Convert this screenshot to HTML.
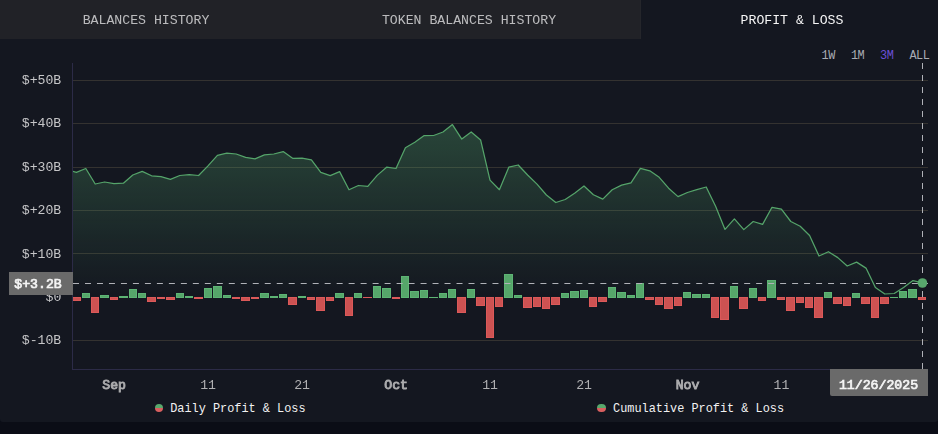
<!DOCTYPE html>
<html lang="en">
<head>
<meta charset="utf-8">
<title>Profit &amp; Loss</title>
<style>
html,body{margin:0;padding:0;}
body{width:938px;height:434px;overflow:hidden;background:#0b0d16;font-family:"Liberation Mono",monospace;}
.panel{position:absolute;left:0;top:0;width:938px;height:422px;background:#141720;border-radius:0 0 3px 3px;overflow:hidden;}
.tabbg{position:absolute;left:0;top:0;width:640px;height:39px;background:#212227;border-right:1px solid #25262b;}
.tab{position:absolute;top:1px;height:39px;line-height:39px;font-size:13.2px;color:#ededee;opacity:.76;will-change:transform;white-space:nowrap;transform:translateX(-50%);letter-spacing:0;}
.tab.active{color:#f6f6f6;opacity:1;}
.rng{position:absolute;top:48px;height:16px;line-height:16px;font-size:11.88px;letter-spacing:-0.5px;color:#a9acb4;white-space:nowrap;}
.rng.on{color:#6a4fd6;}
.leg{position:absolute;top:401px;height:16px;line-height:16px;font-size:11.88px;color:#f2f2f2;white-space:nowrap;}
.dot{position:absolute;top:403.8px;width:8.6px;height:8.4px;border-radius:50%;background:linear-gradient(#58a86c 0,#58a86c 50%,#d95f5f 50%,#d95f5f 100%);}
svg{position:absolute;left:0;top:0;will-change:transform;}
svg text{font-family:"Liberation Mono",monospace;font-size:13.2px;}
.grid line{stroke:#343230;stroke-width:1;shape-rendering:crispEdges;}
.yl text{fill:#c6c6c8;}
.xl text{fill:#b0b0b2;}
.xl text.b{fill:#acacae;stroke:#acacae;stroke-width:0.9;}
rect.g{fill:#56a66a;stroke:#5db474;stroke-width:1;}
rect.r{fill:#cd5252;stroke:#dc5959;stroke-width:1;}
</style>
</head>
<body>
<div class="panel">
<div class="tabbg"></div>
<div class="tab active" style="left:792.1px">PROFIT &amp; LOSS</div>
<div class="rng" style="left:821.6px">1W</div>
<div class="rng" style="left:850.9px">1M</div>
<div class="rng on" style="left:880.1px">3M</div>
<div class="rng" style="left:909.4px">ALL</div>
<div class="dot" style="left:154.6px"></div>
<div class="leg" style="left:170.2px">Daily Profit &amp; Loss</div>
<div class="dot" style="left:597.1px"></div>
<div class="leg" style="left:613px">Cumulative Profit &amp; Loss</div>
<div class="tab" style="left:146.4px">BALANCES HISTORY</div>
<div class="tab" style="left:469.2px">TOKEN BALANCES HISTORY</div>
<svg width="938" height="422" viewBox="0 0 938 422">
<defs>
<linearGradient id="ag" x1="0" y1="123" x2="0" y2="297.5" gradientUnits="userSpaceOnUse">
<stop offset="0" stop-color="#5ab474" stop-opacity="0.30"/>
<stop offset="1" stop-color="#5ab474" stop-opacity="0"/>
</linearGradient>
<clipPath id="cp"><rect x="73" y="63" width="855" height="307"/></clipPath>
</defs>
<g class="grid">
<line x1="72.5" x2="928" y1="80.5" y2="80.5"/>
<line x1="72.5" x2="928" y1="123.5" y2="123.5"/>
<line x1="72.5" x2="928" y1="167.5" y2="167.5"/>
<line x1="72.5" x2="928" y1="210.5" y2="210.5"/>
<line x1="72.5" x2="928" y1="253.5" y2="253.5"/>
<line x1="72.5" x2="928" y1="340.5" y2="340.5"/>
</g>
<line x1="72.5" x2="72.5" y1="63" y2="370" stroke="#2c2b47" stroke-width="1" shape-rendering="crispEdges"/>
<line x1="72" x2="928" y1="369.5" y2="369.5" stroke="#2c2b47" stroke-width="1" shape-rendering="crispEdges"/>
<g class="yl">
<text x="61.3" y="83.9" text-anchor="end">$+50B</text>
<text x="61.3" y="127.3" text-anchor="end">$+40B</text>
<text x="61.3" y="170.7" text-anchor="end">$+30B</text>
<text x="61.3" y="214.1" text-anchor="end">$+20B</text>
<text x="61.3" y="257.5" text-anchor="end">$+10B</text>
<text x="61.3" y="300.9" text-anchor="end">$0</text>
<text x="61.3" y="344.3" text-anchor="end">$-10B</text>
</g>
<g class="xl">
<text x="114.1" y="388.9" text-anchor="middle" class="b">Sep</text>
<text x="208.1" y="388.9" text-anchor="middle">11</text>
<text x="302.1" y="388.9" text-anchor="middle">21</text>
<text x="396.1" y="388.9" text-anchor="middle" class="b">Oct</text>
<text x="490.1" y="388.9" text-anchor="middle">11</text>
<text x="584.1" y="388.9" text-anchor="middle">21</text>
<text x="687.5" y="388.9" text-anchor="middle" class="b">Nov</text>
<text x="781.5" y="388.9" text-anchor="middle">11</text>
</g>
<g clip-path="url(#cp)">
<path d="M67.0,169.8 L76.4,172.4 L85.8,168.5 L95.2,184.0 L104.6,182.0 L114.0,183.7 L123.4,183.2 L132.8,175.0 L142.2,171.4 L151.6,175.8 L161.0,176.7 L170.4,179.4 L179.8,175.5 L189.2,174.6 L198.6,175.5 L208.0,165.9 L217.4,155.4 L226.8,153.1 L236.2,154.0 L245.6,157.4 L255.0,158.8 L264.4,154.8 L273.8,154.0 L283.2,151.6 L292.6,158.3 L302.0,158.1 L311.4,159.8 L320.8,172.4 L330.2,175.6 L339.6,171.6 L349.0,189.8 L358.4,185.5 L367.8,186.4 L377.2,175.4 L386.6,167.2 L396.0,168.5 L405.4,147.8 L414.8,142.3 L424.2,135.6 L433.6,135.5 L443.0,132.0 L452.4,124.6 L461.8,139.1 L471.2,132.0 L480.6,139.9 L490.0,180.1 L499.4,189.7 L508.8,167.2 L518.2,165.0 L527.6,175.0 L537.0,184.1 L546.4,195.0 L555.8,202.5 L565.2,199.5 L574.6,193.3 L584.0,186.0 L593.4,194.7 L602.8,199.1 L612.2,189.7 L621.6,185.1 L631.0,182.9 L640.4,168.3 L649.8,170.8 L659.2,177.3 L668.6,188.2 L678.0,196.6 L687.4,192.5 L696.8,189.7 L706.2,187.0 L715.6,206.3 L725.0,229.4 L734.4,218.9 L743.8,229.6 L753.2,221.5 L762.6,224.4 L772.0,207.3 L781.4,209.1 L790.8,221.5 L800.2,226.2 L809.6,235.5 L819.0,256.0 L828.4,251.7 L837.8,257.6 L847.2,266.0 L856.6,262.1 L866.0,268.1 L875.4,287.6 L884.8,294.0 L894.2,293.5 L903.6,287.4 L913.0,280.6 L922.4,282.9 L922.4,297.5 L67.0,297.5 Z" fill="url(#ag)"/>
<rect class="r" x="72.5" y="297.5" width="8" height="3"/>
<rect class="g" x="82.5" y="293.5" width="7" height="4"/>
<rect class="r" x="91.5" y="297.5" width="7" height="15"/>
<rect class="g" x="100.5" y="295.5" width="8" height="2"/>
<rect class="r" x="110.5" y="297.5" width="7" height="2"/>
<rect class="g" x="119.5" y="296.5" width="8" height="1"/>
<rect class="g" x="129.5" y="289.5" width="7" height="8"/>
<rect class="g" x="138.5" y="293.5" width="7" height="4"/>
<rect class="r" x="147.5" y="297.5" width="8" height="4"/>
<rect class="r" x="157.5" y="297.5" width="7" height="1"/>
<rect class="r" x="166.5" y="297.5" width="8" height="2"/>
<rect class="g" x="176.5" y="293.5" width="7" height="4"/>
<rect class="g" x="185.5" y="296.5" width="7" height="1"/>
<rect class="r" x="194.5" y="297.5" width="8" height="1"/>
<rect class="g" x="204.5" y="288.5" width="7" height="9"/>
<rect class="g" x="213.5" y="286.5" width="8" height="11"/>
<rect class="g" x="223.5" y="295.5" width="7" height="2"/>
<rect class="r" x="232.5" y="297.5" width="7" height="1"/>
<rect class="r" x="241.5" y="297.5" width="8" height="3"/>
<rect class="r" x="251.5" y="297.5" width="7" height="1"/>
<rect class="g" x="260.5" y="293.5" width="8" height="4"/>
<rect class="g" x="270.5" y="296.5" width="7" height="1"/>
<rect class="g" x="279.5" y="294.5" width="7" height="3"/>
<rect class="r" x="288.5" y="297.5" width="8" height="7"/>
<rect class="g" x="298.5" y="296.5" width="7" height="1"/>
<rect class="r" x="307.5" y="297.5" width="7" height="2"/>
<rect class="r" x="316.5" y="297.5" width="8" height="13"/>
<rect class="r" x="326.5" y="297.5" width="7" height="3"/>
<rect class="g" x="335.5" y="293.5" width="8" height="4"/>
<rect class="r" x="345.5" y="297.5" width="7" height="18"/>
<rect class="g" x="354.5" y="293.5" width="7" height="4"/>
<rect class="r" x="363.5" y="297.5" width="8" height="0.01"/>
<rect class="g" x="373.5" y="286.5" width="7" height="11"/>
<rect class="g" x="382.5" y="288.5" width="8" height="9"/>
<rect class="r" x="392.5" y="297.5" width="7" height="1"/>
<rect class="g" x="401.5" y="276.5" width="7" height="21"/>
<rect class="g" x="410.5" y="291.5" width="8" height="6"/>
<rect class="g" x="420.5" y="290.5" width="7" height="7"/>
<rect class="g" x="429.5" y="297.5" width="8" height="0.01"/>
<rect class="g" x="439.5" y="293.5" width="7" height="4"/>
<rect class="g" x="448.5" y="289.5" width="7" height="8"/>
<rect class="r" x="457.5" y="297.5" width="8" height="15"/>
<rect class="g" x="467.5" y="289.5" width="7" height="8"/>
<rect class="r" x="476.5" y="297.5" width="8" height="8"/>
<rect class="r" x="486.5" y="297.5" width="7" height="40"/>
<rect class="r" x="495.5" y="297.5" width="7" height="9"/>
<rect class="g" x="504.5" y="274.5" width="8" height="23"/>
<rect class="g" x="514.5" y="295.5" width="7" height="2"/>
<rect class="r" x="523.5" y="297.5" width="8" height="10"/>
<rect class="r" x="533.5" y="297.5" width="7" height="9"/>
<rect class="r" x="542.5" y="297.5" width="7" height="11"/>
<rect class="r" x="551.5" y="297.5" width="8" height="7"/>
<rect class="g" x="561.5" y="293.5" width="7" height="4"/>
<rect class="g" x="570.5" y="291.5" width="8" height="6"/>
<rect class="g" x="580.5" y="290.5" width="7" height="7"/>
<rect class="r" x="589.5" y="297.5" width="7" height="9"/>
<rect class="r" x="598.5" y="297.5" width="8" height="4"/>
<rect class="g" x="608.5" y="287.5" width="7" height="10"/>
<rect class="g" x="617.5" y="292.5" width="8" height="5"/>
<rect class="g" x="627.5" y="295.5" width="7" height="2"/>
<rect class="g" x="636.5" y="283.5" width="7" height="14"/>
<rect class="r" x="645.5" y="297.5" width="8" height="2"/>
<rect class="r" x="655.5" y="297.5" width="7" height="7"/>
<rect class="r" x="664.5" y="297.5" width="8" height="11"/>
<rect class="r" x="674.5" y="297.5" width="7" height="8"/>
<rect class="g" x="683.5" y="292.5" width="7" height="5"/>
<rect class="g" x="692.5" y="294.5" width="8" height="3"/>
<rect class="g" x="702.5" y="294.5" width="7" height="3"/>
<rect class="r" x="711.5" y="297.5" width="7" height="20"/>
<rect class="r" x="720.5" y="297.5" width="8" height="22"/>
<rect class="g" x="730.5" y="286.5" width="7" height="11"/>
<rect class="r" x="739.5" y="297.5" width="8" height="11"/>
<rect class="g" x="749.5" y="288.5" width="7" height="9"/>
<rect class="r" x="758.5" y="297.5" width="7" height="3"/>
<rect class="g" x="767.5" y="280.5" width="8" height="17"/>
<rect class="r" x="777.5" y="297.5" width="7" height="2"/>
<rect class="r" x="786.5" y="297.5" width="8" height="13"/>
<rect class="r" x="796.5" y="297.5" width="7" height="5"/>
<rect class="r" x="805.5" y="297.5" width="7" height="10"/>
<rect class="r" x="814.5" y="297.5" width="8" height="20"/>
<rect class="g" x="824.5" y="292.5" width="7" height="5"/>
<rect class="r" x="833.5" y="297.5" width="8" height="6"/>
<rect class="r" x="843.5" y="297.5" width="7" height="8"/>
<rect class="g" x="852.5" y="293.5" width="7" height="4"/>
<rect class="r" x="861.5" y="297.5" width="8" height="6"/>
<rect class="r" x="871.5" y="297.5" width="7" height="20"/>
<rect class="r" x="880.5" y="297.5" width="8" height="6"/>
<rect class="g" x="890.5" y="297.5" width="7" height="0.01"/>
<rect class="g" x="899.5" y="291.5" width="7" height="6"/>
<rect class="g" x="908.5" y="289.5" width="8" height="8"/>
<rect class="r" x="918.5" y="297.5" width="7" height="2"/>
<path d="M67.0,169.8 L76.4,172.4 L85.8,168.5 L95.2,184.0 L104.6,182.0 L114.0,183.7 L123.4,183.2 L132.8,175.0 L142.2,171.4 L151.6,175.8 L161.0,176.7 L170.4,179.4 L179.8,175.5 L189.2,174.6 L198.6,175.5 L208.0,165.9 L217.4,155.4 L226.8,153.1 L236.2,154.0 L245.6,157.4 L255.0,158.8 L264.4,154.8 L273.8,154.0 L283.2,151.6 L292.6,158.3 L302.0,158.1 L311.4,159.8 L320.8,172.4 L330.2,175.6 L339.6,171.6 L349.0,189.8 L358.4,185.5 L367.8,186.4 L377.2,175.4 L386.6,167.2 L396.0,168.5 L405.4,147.8 L414.8,142.3 L424.2,135.6 L433.6,135.5 L443.0,132.0 L452.4,124.6 L461.8,139.1 L471.2,132.0 L480.6,139.9 L490.0,180.1 L499.4,189.7 L508.8,167.2 L518.2,165.0 L527.6,175.0 L537.0,184.1 L546.4,195.0 L555.8,202.5 L565.2,199.5 L574.6,193.3 L584.0,186.0 L593.4,194.7 L602.8,199.1 L612.2,189.7 L621.6,185.1 L631.0,182.9 L640.4,168.3 L649.8,170.8 L659.2,177.3 L668.6,188.2 L678.0,196.6 L687.4,192.5 L696.8,189.7 L706.2,187.0 L715.6,206.3 L725.0,229.4 L734.4,218.9 L743.8,229.6 L753.2,221.5 L762.6,224.4 L772.0,207.3 L781.4,209.1 L790.8,221.5 L800.2,226.2 L809.6,235.5 L819.0,256.0 L828.4,251.7 L837.8,257.6 L847.2,266.0 L856.6,262.1 L866.0,268.1 L875.4,287.6 L884.8,294.0 L894.2,293.5 L903.6,287.4 L913.0,280.6 L922.4,282.9" fill="none" stroke="#55a46a" stroke-width="1.25" stroke-linejoin="round"/>
</g>
<line x1="73" x2="928" y1="283.5" y2="283.5" stroke="#b0b2b8" stroke-width="1" stroke-dasharray="6 5.985"/>
<line x1="922.5" x2="922.5" y1="63" y2="370" stroke="#b0b2b8" stroke-width="1" stroke-dasharray="6 6" shape-rendering="crispEdges"/>
<circle cx="922.45" cy="283" r="4.8" fill="#58a86d"/>
<rect x="9" y="272" width="64" height="23" fill="#6a6a6a"/>
<text x="38" y="287.7" text-anchor="middle" fill="#f4f4f4" stroke="#f4f4f4" stroke-width="0.7">$+3.2B</text>
<path d="M830,369 H928 V396 H832 Q830,396 830,394 Z" fill="#6a6a6a"/>
<text x="878.5" y="389.3" text-anchor="middle" fill="#f4f4f4" stroke="#f4f4f4" stroke-width="0.7">11/26/2025</text>
</svg>
</div>
</body>
</html>
